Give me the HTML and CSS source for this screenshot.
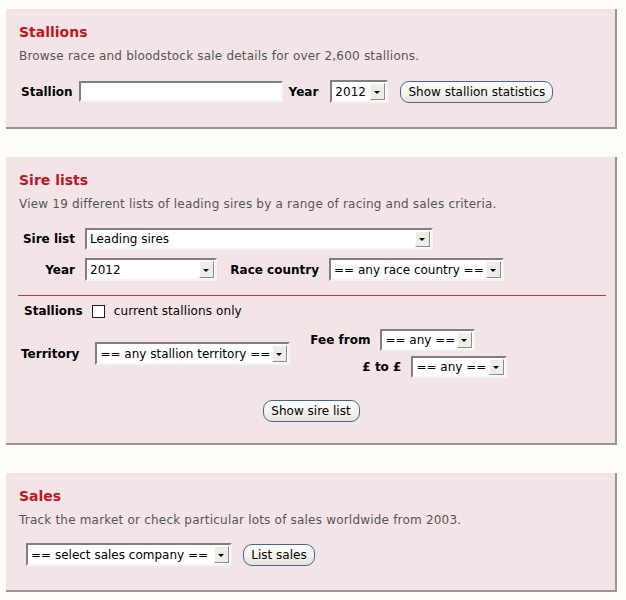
FILE: index.html
```html
<!DOCTYPE html>
<html lang="en">

<head>
    <meta charset="UTF-8">
    <meta name="viewport" content="width=device-width, initial-scale=1.0">
    <title>Stallions, sire lists and sales</title>
    <link rel="stylesheet" href="styles.css">
</head>

<body>
    <div class="page">
        <!-- Stallions -->
        <div class="panel">
            <h2>Stallions</h2>
            <p class="intro">Browse race and bloodstock sale details for over 2,600 stallions.</p>
            <form class="row stallion-row">
                <label for="stallion">Stallion</label>
                <input type="text" id="stallion" class="stallion-input">
                <label for="stallionYear" class="gap-l">Year</label>
                <span class="drop w-year">
                    <select id="stallionYear">
                        <option>2012</option>
                        <option>2011</option>
                        <option>2010</option>
                    </select>
                </span>
                <button type="button" class="btn w-stats">Show stallion statistics</button>
            </form>
        </div>

        <!-- Sire lists -->
        <div class="panel">
            <h2>Sire lists</h2>
            <p class="intro">View 19 different lists of leading sires by a range of racing and sales criteria.</p>
            <form>
                <div class="sire-grid">
                    <label for="sireList" class="grid-label">Sire list</label>
                    <span class="drop w-list span-3">
                        <select id="sireList">
                            <option>Leading sires</option>
                        </select>
                    </span>
                    <label for="sireYear" class="grid-label">Year</label>
                    <span class="drop w-sireyear">
                        <select id="sireYear">
                            <option>2012</option>
                        </select>
                    </span>
                    <label for="raceCountry" class="grid-label">Race country</label>
                    <span class="drop w-country">
                        <select id="raceCountry">
                            <option>== any race country ==</option>
                        </select>
                    </span>
                </div>

                <hr class="divider">

                <div class="row check-row">
                    <label for="current" class="check-title">Stallions</label>
                    <input type="checkbox" id="current" class="check">
                    <label for="current" class="check-text">current stallions only</label>
                </div>

                <div class="row territory-row">
                    <label for="territory">Territory</label>
                    <span class="drop w-territory">
                        <select id="territory">
                            <option>== any stallion territory ==</option>
                        </select>
                    </span>
                    <div class="fees">
                        <div class="row">
                            <label for="feeFrom" class="fee-label">Fee from</label>
                            <span class="drop w-fee1">
                                <select id="feeFrom">
                                    <option>== any ==</option>
                                </select>
                            </span>
                        </div>
                        <div class="row">
                            <label for="feeTo" class="to-label">£ to £</label>
                            <span class="drop w-fee2">
                                <select id="feeTo">
                                    <option>== any ==</option>
                                </select>
                            </span>
                        </div>
                    </div>
                </div>

                <div class="center-row">
                    <button type="button" class="btn w-sire">Show sire list</button>
                </div>
            </form>
        </div>

        <!-- Sales -->
        <div class="panel">
            <h2>Sales</h2>
            <p class="intro">Track the market or check particular lots of sales worldwide from 2003.</p>
            <form class="row sales-row">
                <span class="drop w-sales">
                    <select id="salesCompany">
                        <option>== select sales company ==</option>
                    </select>
                </span>
                <button type="button" class="btn w-listsales">List sales</button>
            </form>
        </div>
    </div>
</body>

</html>
```

FILE: styles.css
```css
body {
    margin: 0;
    background: #fffdf7;
    font-family: "DejaVu Sans", Verdana, sans-serif;
    font-size: 12px;
    color: #000;
}
.page {
    padding: 9px 9px 0 6px;
}
.panel {
    background: #f3e5e7;
    border-right: 2px solid #9a9495;
    border-bottom: 2px solid #9a9495;
    padding: 14px 12px 24px 13px;
    margin-bottom: 28px;
}
h2 {
    margin: 0;
    color: #c3161f;
    font-size: 14px;
    line-height: 18px;
    font-weight: bold;
}
.intro {
    margin: 8px 0 0;
    line-height: 14px;
    color: #555;
    letter-spacing: 0.2px;
}
label {
    font-weight: bold;
    white-space: nowrap;
    line-height: 14px;
}
.row {
    display: flex;
    align-items: center;
}

/* form controls */
input[type="text"],
select {
    box-sizing: border-box;
    font-family: inherit;
    font-size: 12px;
    color: #000;
    background: #fff;
    border: 2px solid;
    border-color: #808080 #f4f4f4 #f4f4f4 #808080;
    border-radius: 0;
}
input[type="text"] {
    height: 21px;
    padding: 0 3px;
}
.drop {
    position: relative;
    display: inline-block;
    height: 23px;
}
.drop select {
    appearance: none;
    -webkit-appearance: none;
    width: 100%;
    height: 100%;
    padding: 0 18px 0 3px;
    outline: none;
}
.drop::after {
    content: "";
    position: absolute;
    top: 3px;
    right: 3px;
    bottom: 3px;
    width: 15px;
    box-sizing: border-box;
    background: #efede6;
    border: 1px solid;
    border-color: #fff #8c8c8c #8c8c8c #fff;
    pointer-events: none;
}
.drop::before {
    content: "";
    position: absolute;
    top: 50%;
    right: 8px;
    margin-top: -1px;
    border-left: 3px solid transparent;
    border-right: 3px solid transparent;
    border-top: 3px solid #000;
    z-index: 1;
    pointer-events: none;
}
.btn {
    box-sizing: border-box;
    height: 22px;
    padding: 0 4px;
    font-family: inherit;
    font-size: 12px;
    color: #000;
    background: linear-gradient(#fefefe, #f2f1ec 60%, #e4e2da);
    border: 1px solid #46678f;
    border-radius: 9px;
    cursor: pointer;
}

/* stallions */
.stallion-row {
    margin-top: 17px;
    padding-left: 2px;
}
.stallion-input {
    width: 204px;
    margin-left: 6px;
}
.gap-l {
    margin: 0 12px 0 6px;
}
.w-year {
    width: 58px;
}
.w-stats {
    width: 153px;
    margin-left: 12px;
}

/* sire lists */
.sire-grid {
    display: grid;
    grid-template-columns: 56px 132px 92px 175px;
    column-gap: 10px;
    row-gap: 8px;
    align-items: center;
    margin-top: 17px;
}
.grid-label {
    text-align: right;
}
.span-3 {
    grid-column: span 3;
}
.w-list {
    width: 348px;
    height: 22px;
}
.divider {
    border: 0;
    border-top: 1px solid #d2363a;
    margin: 14px 0 0 -1px;
    width: 588px;
}
.check-row {
    margin-top: 8px;
    padding-left: 5px;
}
.check {
    width: 13px;
    height: 13px;
    margin: 0 0 0 9px;
    appearance: none;
    -webkit-appearance: none;
    background: #fff;
    border: 1px solid #1c1c1c;
}
.check:checked {
    background: #fff linear-gradient(#333, #333) center / 7px 7px no-repeat;
}
.check-text {
    font-weight: normal;
    margin-left: 9px;
    letter-spacing: 0.1px;
}
.territory-row {
    margin-top: 11px;
    padding-left: 2px;
}
.w-territory {
    width: 195px;
    margin-left: 16px;
}
.fees {
    display: flex;
    flex-direction: column;
    gap: 5px;
    margin-left: 16px;
}
.fees .drop {
    height: 22px;
}
.fee-label {
    width: 64px;
    text-align: right;
    margin-right: 10px;
}
.to-label {
    width: 95px;
    text-align: right;
    margin-right: 10px;
}
.w-fee1 {
    width: 95px;
}
.w-fee2 {
    width: 96px;
}
.w-sireyear {
    width: 132px;
}
.w-country {
    width: 175px;
}
.center-row {
    display: flex;
    justify-content: center;
    margin-top: 22px;
    margin-bottom: -3px;
}
.w-sire {
    width: 97px;
}

/* sales */
.sales-row {
    margin-top: 16px;
    padding-left: 7px;
}
.w-sales {
    width: 206px;
}
.w-listsales {
    width: 72px;
    margin-left: 11px;
}
```
